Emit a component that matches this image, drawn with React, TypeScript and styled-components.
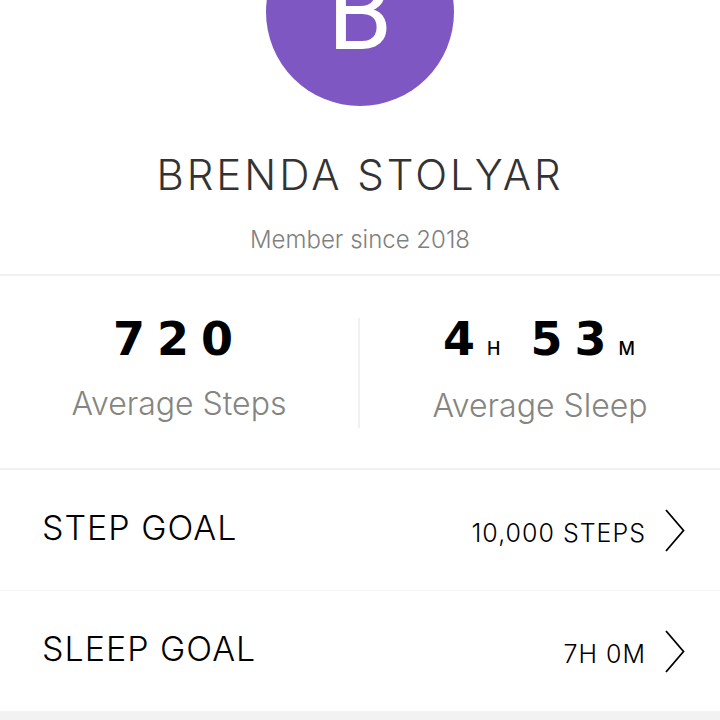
import React from "react";
import styled, { createGlobalStyle } from "styled-components";

const GlobalStyle = createGlobalStyle`
  * { box-sizing: border-box; }
  body { margin: 0; background: #fff; }
`;

const Page = styled.main`
  display: flex;
  flex-direction: column;
  min-height: 100vh;
  overflow: hidden;
  color: #000;
  font-family: Inter, "Liberation Sans", sans-serif;
  font-weight: 300;
`;

const Profile = styled.header`
  display: flex;
  flex-direction: column;
  align-items: center;
  padding-bottom: 18px;
  border-bottom: 2px solid #f0f0f0;
`;

const Avatar = styled.div`
  flex: none;
  width: 188px;
  height: 188px;
  margin-top: -82px;
  border-radius: 50%;
  background: #7e57c2;
  color: #fff;
  font: 400 104px/192px Roboto, sans-serif;
  text-align: center;
`;

const Name = styled.h1`
  margin: 40px 0 0;
  color: #333;
  font-size: 42px;
  font-weight: 300;
  line-height: 58px;
  letter-spacing: 3px;
`;

const Since = styled.p`
  margin: 20px 0 0;
  color: #808080;
  font-size: 24px;
  line-height: 32px;
`;

const Stats = styled.section`
  display: grid;
  grid-template-columns: 1fr 1fr;
  padding: 42px 0 40px;
  border-bottom: 2px solid #f0f0f0;
`;

const Stat = styled.div`
  display: flex;
  flex-direction: column;
  align-items: center;
  height: 110px;
  &:first-child { border-right: 2px solid #f0f0f0; }
`;

const Value = styled.div`
  height: 44px;
  font-family: "DejaVu Sans", sans-serif;
  font-size: 46px;
  font-weight: 700;
  line-height: 42px;
  letter-spacing: 12px;
  white-space: nowrap;
`;

const Unit = styled.span`
  font: 500 18px/20px Inter, sans-serif;
  letter-spacing: 2px;
`;

const Caption = styled.div<{ $gap: number }>`
  margin-top: ${({ $gap }) => $gap}px;
  color: #858580;
  font-size: 32px;
  line-height: 44px;
`;

const Goal = styled.button`
  display: flex;
  align-items: center;
  width: 100%;
  height: 121px;
  padding: 0 34px 0 42px;
  border: 0;
  border-bottom: 1px solid #f4f4f4;
  background: #fff;
  color: #000;
  font: inherit;
  text-align: left;
`;

const GoalName = styled.span`
  flex: 1;
  padding-bottom: 4px;
  font-size: 34px;
  line-height: 44px;
  letter-spacing: 1px;
`;

const GoalValue = styled.span`
  padding-top: 6px;
  margin-right: 18px;
  font-size: 25px;
  line-height: 32px;
  letter-spacing: 1px;
`;

const Footer = styled.footer`
  flex: 1;
  background: #f2f2f2;
`;

const Chevron = () => (
  <svg width="22" height="44" viewBox="0 0 22 44" fill="none" stroke="#000" strokeWidth="1.8" aria-hidden="true">
    <path d="M2 2L19.5 22.5L2 43" />
  </svg>
);

export default function App() {
  return (
    <>
      <GlobalStyle />
      <Page>
        <Profile>
          <Avatar>B</Avatar>
          <Name>BRENDA STOLYAR</Name>
          <Since>Member since 2018</Since>
        </Profile>
        <Stats>
          <Stat>
            <Value>720</Value>
            <Caption $gap={20}>Average Steps</Caption>
          </Stat>
          <Stat>
            <Value>4<Unit>H</Unit> 53<Unit>M</Unit></Value>
            <Caption $gap={22}>Average Sleep</Caption>
          </Stat>
        </Stats>
        <Goal type="button"><GoalName>STEP GOAL</GoalName><GoalValue>10,000 STEPS</GoalValue><Chevron /></Goal>
        <Goal type="button"><GoalName>SLEEP GOAL</GoalName><GoalValue>7H 0M</GoalValue><Chevron /></Goal>
        <Footer />
      </Page>
    </>
  );
}
